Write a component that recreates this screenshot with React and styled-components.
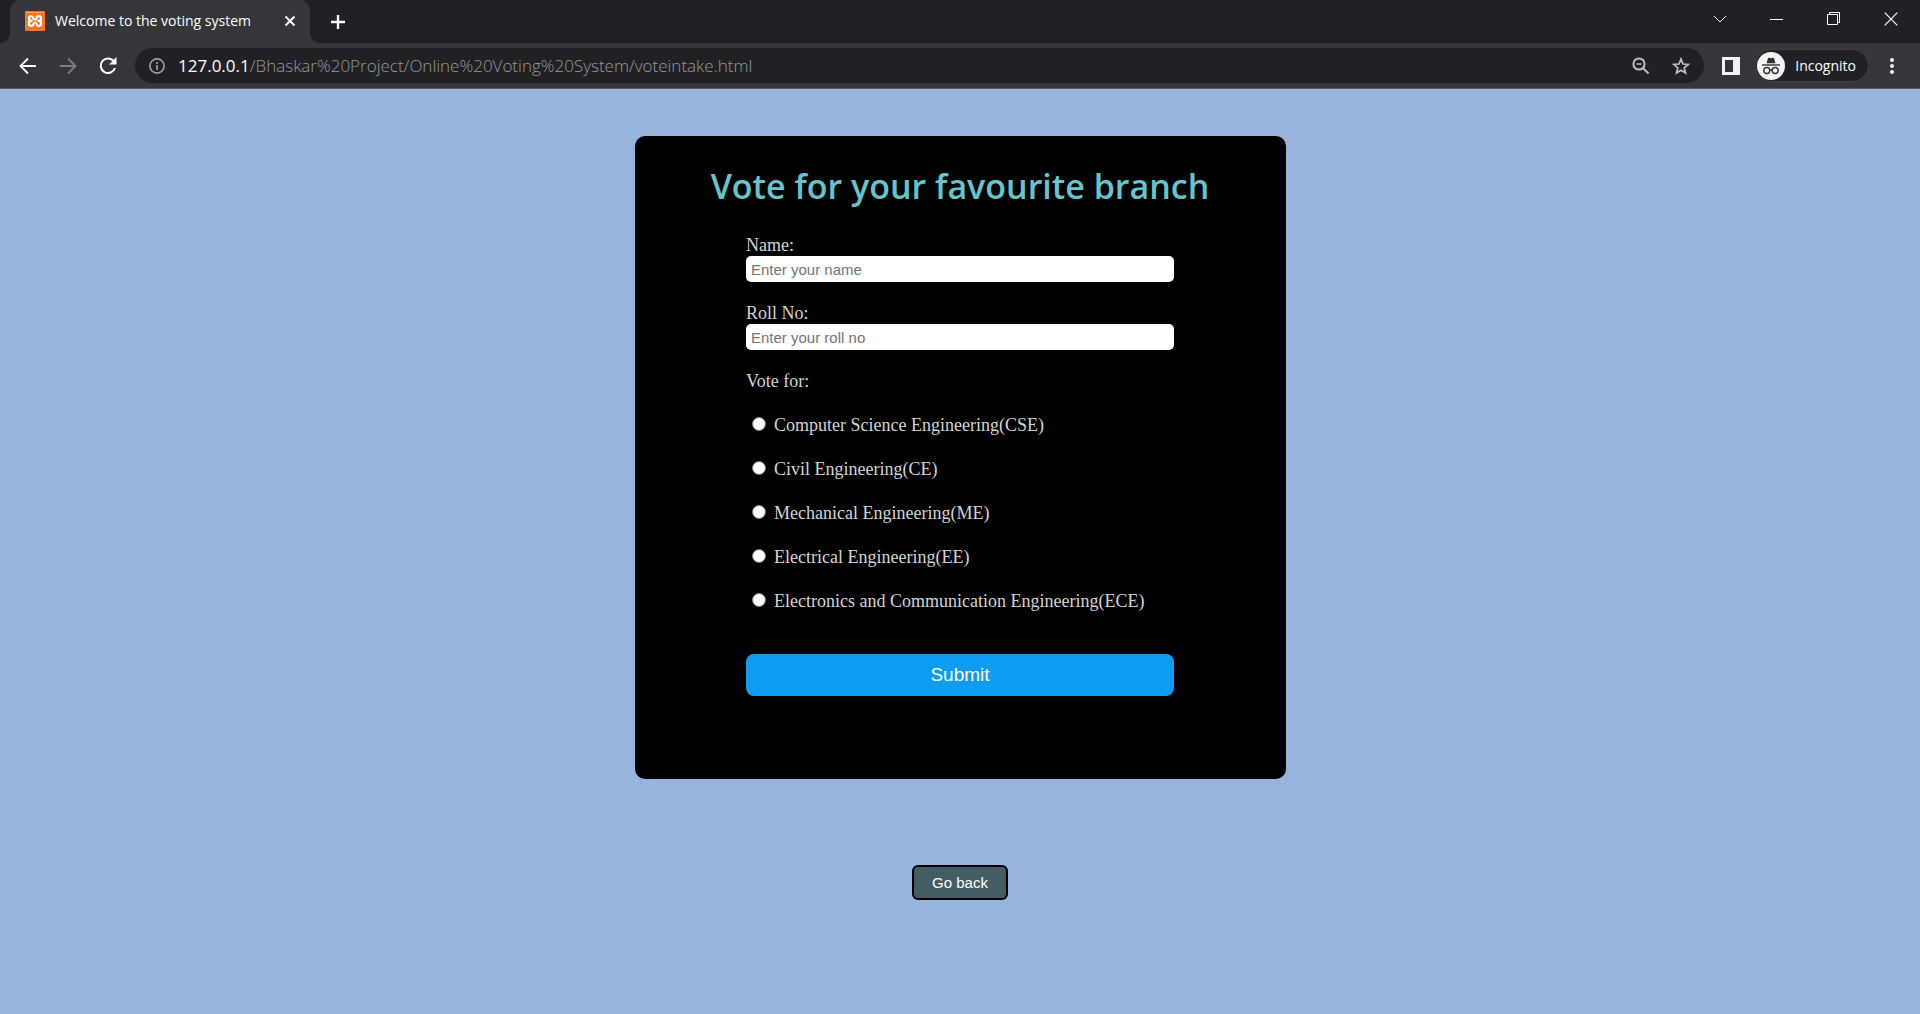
import React from "react";
import styled, { createGlobalStyle } from "styled-components";

const GlobalStyle = createGlobalStyle`
  *, *::before, *::after { box-sizing: border-box; }
  html, body, #root { height: 100%; }
  body { margin: 0; background: #99b4dc; }
  button, input { font-family: "Liberation Sans", Arial, sans-serif; }
`;

const Window = styled.div`
  display: flex;
  flex-direction: column;
  min-height: 100%;
`;

const Chrome = styled.header`
  background: #35363a;
  border-bottom: 1px solid #5b5c60;
  font-family: "Open Sans", "Noto Sans", sans-serif;
  color: #fff;
`;

const TabStrip = styled.div`
  display: flex;
  align-items: stretch;
  height: 43px;
  padding: 0 1px 0 10px;
  background: #202124;
`;

const Tab = styled.div`
  position: relative;
  display: flex;
  align-items: center;
  width: 300px;
  padding: 0 12px 1px 15px;
  gap: 10px;
  background: #35363a;
  border-radius: 10px 10px 0 0;

  &::before,
  &::after {
    content: "";
    position: absolute;
    bottom: 0;
    width: 10px;
    height: 10px;
  }
  &::before {
    right: 100%;
    background: radial-gradient(circle at 0 0, transparent 10px, #35363a 10px);
  }
  &::after {
    left: 100%;
    background: radial-gradient(circle at 100% 0, transparent 10px, #35363a 10px);
  }
`;

const TabTitle = styled.span`
  flex: 1;
  font-size: 14px;
  line-height: 20px;
  white-space: nowrap;
`;

const IconButton = styled.button`
  display: inline-flex;
  align-items: center;
  justify-content: center;
  flex: none;
  width: ${(p) => p.$w || 40}px;
  height: ${(p) => p.$h || 35}px;
  padding: 0;
  border: 0;
  background: none;
  color: ${(p) => p.$color || "#fff"};
`;

const NewTab = styled(IconButton)`
  align-self: center;
  margin-left: 8px;
`;

const WindowControls = styled.div`
  display: flex;
  margin-left: auto;
`;

const Toolbar = styled.div`
  display: flex;
  align-items: center;
  height: 45px;
  padding: 0 5px 0 8px;
`;

const AddressBar = styled.div`
  display: flex;
  flex: 1;
  align-items: center;
  height: 35px;
  margin: 0 7px;
  padding: 0 3px 0 2px;
  border-radius: 18px;
  background: #202124;
`;

const Url = styled.div`
  flex: 1;
  padding-left: 1px;
  color: #96999e;
  font-size: 17px;
  font-weight: 300;
  line-height: 24px;
  white-space: nowrap;
`;

const Host = styled.span`
  color: #fff;
  font-weight: 400;
`;

const Incognito = styled.button`
  display: flex;
  align-items: center;
  gap: 10px;
  height: 33px;
  margin-left: 4px;
  padding: 0 12px 0 1px;
  border: 1px solid #3f4043;
  border-radius: 17px;
  background: #202124;
  color: #fff;
  font-family: "Open Sans", "Noto Sans", sans-serif;
  font-size: 14px;
`;

const Page = styled.main`
  display: flex;
  flex: 1;
  flex-direction: column;
  align-items: center;
  padding: 47px 16px;
  background: #99b4dc;
`;

const Card = styled.section`
  width: 100%;
  max-width: 651px;
  padding: 28px 32px 83px;
  border-radius: 10px;
  background: #000;
  color: #d3d3d3;
  font-family: "Liberation Serif", "Times New Roman", serif;
  font-size: 18px;
  line-height: 18px;
`;

const Heading = styled.h1`
  margin: 0 0 28px;
  color: #66c5cc;
  font-family: "Trebuchet MS", "Open Sans", sans-serif;
  font-size: 34px;
  font-weight: 600;
  line-height: 44px;
  text-align: center;
`;

const Form = styled.form`
  display: flex;
  flex-direction: column;
  max-width: 428px;
  margin: 0 auto;
`;

const Field = styled.div`
  display: flex;
  flex-direction: column;
  gap: 2px;
  margin-bottom: 22px;
`;

const TextInput = styled.input`
  width: 100%;
  height: 26px;
  padding: 0 5px;
  border: 0;
  border-radius: 5px;
  background: #fff;
  font-size: 15px;

  &::placeholder {
    color: #757575;
  }
`;

const Choices = styled.fieldset`
  display: flex;
  flex-direction: column;
  gap: 26px;
  min-width: 0;
  margin: 0 0 44px;
  padding: 0;
  border: 0;
`;

const Legend = styled.legend`
  margin-bottom: 26px;
  padding: 0;
`;

const Choice = styled.label`
  display: flex;
  align-items: center;
  gap: 8px;
  padding-left: 6px;
`;

const Radio = styled.input`
  appearance: none;
  width: 14px;
  height: 14px;
  margin: 0 0 2px;
  border: 1px solid #767676;
  border-radius: 50%;
  background: #fff;

  &:checked {
    border: 4px solid #0075ff;
  }
`;

const Submit = styled.button`
  height: 42px;
  border: 0;
  border-radius: 8px;
  background: #0e9cf2;
  color: #fff;
  font-size: 19px;
`;

const GoBack = styled.button`
  height: 35px;
  margin-top: 86px;
  padding: 0 18px;
  border: 2px solid #000;
  border-radius: 6px;
  background: #435d62;
  color: #fff;
  font-size: 15px;
`;

const branches = [
  ["cse", "Computer Science Engineering(CSE)"],
  ["ce", "Civil Engineering(CE)"],
  ["me", "Mechanical Engineering(ME)"],
  ["ee", "Electrical Engineering(EE)"],
  ["ece", "Electronics and Communication Engineering(ECE)"],
];

function Svg({ size = 20, width = 2, children, ...rest }) {
  return (
    <svg
      width={size}
      height={size}
      viewBox={`0 0 ${size} ${size}`}
      fill="none"
      stroke="currentColor"
      strokeWidth={width}
      aria-hidden="true"
      {...rest}
    >
      {children}
    </svg>
  );
}

function Favicon() {
  return (
    <Svg size={20}>
      <rect width="20" height="20" rx="1" fill="#f37623" stroke="none" />
      <path d="M1 1.500h18" stroke="#f9a368" strokeWidth="1" />
      <path
        d="M8 7.500V6.500C8 5 4 4.500 4 7.200C4 9 5 9.900 6.500 9.900C4.500 9.900 3.800 11 3.800 12.600C3.800 15.800 8.500 15.500 8.500 13C8.500 11.500 11.500 11.500 11.500 13C11.500 15.500 16.200 15.800 16.200 12.600C16.200 11 15.500 9.900 13.500 9.900C15 9.900 16 9 16 7.200C16 4.500 11.500 4.500 11.500 7.500C11.500 8.800 9 9 8 7.500"
        stroke="#fff"
        strokeWidth="2.200"
        strokeLinecap="round"
        strokeLinejoin="round"
      />
    </Svg>
  );
}

function IncognitoBadge() {
  return (
    <Svg size={28} width={1.4}>
      <circle cx="14" cy="14" r="14" fill="#f1f3f4" stroke="none" />
      <path d="M9.500 11.200 11 6.300q.3-.8 1.200-.5l1.800.5 1.800-.5q.9-.3 1.200.5l1.500 4.900z" fill="#303134" stroke="none" />
      <path d="M5 13h18" stroke="#303134" />
      <circle cx="9.800" cy="18.500" r="3" stroke="#303134" />
      <circle cx="18.200" cy="18.500" r="3" stroke="#303134" />
      <path d="M12.800 18.200q1.200-.8 2.400 0" stroke="#303134" />
    </Svg>
  );
}

export default function App() {
  return (
    <Window>
      <GlobalStyle />
      <Chrome>
        <TabStrip>
          <Tab>
            <Favicon />
            <TabTitle>Welcome to the voting system</TabTitle>
            <IconButton $w={16} $h={20} aria-label="Close tab">
              <Svg size={12}><path d="M1.500 1.500l9 9M10.500 1.500l-9 9" /></Svg>
            </IconButton>
          </Tab>
          <NewTab aria-label="New tab">
            <Svg size={16}><path d="M8 1v14M1 8h14" strokeWidth="2.400" /></Svg>
          </NewTab>
          <WindowControls>
            <IconButton $w={57} $h={37} aria-label="Search tabs">
              <Svg size={14} width={1}><path d="M1 4l6 6 6-6" /></Svg>
            </IconButton>
            <IconButton $w={57} $h={37} aria-label="Minimize">
              <Svg size={14} width={1}><path d="M0 7.500h13" /></Svg>
            </IconButton>
            <IconButton $w={57} $h={37} aria-label="Restore">
              <Svg size={14} width={1}><path d="M.5 2.500h10v10H.5zM2.500 2.500v-2h10v10h-2" /></Svg>
            </IconButton>
            <IconButton $w={57} $h={37} aria-label="Close">
              <Svg size={14} width={1.2}><path d="M.7.7l12.600 12.600M13.300.7L.7 13.300" /></Svg>
            </IconButton>
          </WindowControls>
        </TabStrip>
        <Toolbar>
          <IconButton aria-label="Back">
            <Svg size={18} width={1.8}><path d="M17 9H2M9 1.500L1.500 9 9 16.500" /></Svg>
          </IconButton>
          <IconButton $color="#7c7d80" aria-label="Forward">
            <Svg size={18} width={1.8}><path d="M1 9h15M9 1.500L16.500 9 9 16.500" /></Svg>
          </IconButton>
          <IconButton aria-label="Reload">
            <Svg size={18}>
              <path d="M14.800 4.200A7.300 7.300 0 1 0 16 11" />
              <path d="M17.500 0v7.500H10z" fill="currentColor" stroke="none" />
            </Svg>
          </IconButton>
          <AddressBar>
            <IconButton $color="#9aa0a6" aria-label="View site information">
              <Svg size={16} width={1.700}>
                <circle cx="8" cy="8" r="7.100" />
                <path d="M8 7v5M8 4v2" />
              </Svg>
            </IconButton>
            <Url role="textbox" aria-label="Address" aria-readonly="true">
              <Host>127.0.0.1</Host>/Bhaskar%20Project/Online%20Voting%20System/voteintake.html
            </Url>
            <IconButton $color="#bdc1c6" aria-label="Zoom">
              <Svg size={18}>
                <circle cx="7" cy="7" r="5.600" />
                <path d="M11 11l5.500 5.500" />
                <path d="M4.500 7h5" strokeWidth="1.500" />
              </Svg>
            </IconButton>
            <IconButton $color="#bdc1c6" aria-label="Bookmark this tab">
              <Svg size={18} width={1.700}>
                <path d="M9 2l2 5 5.200.4-4 3.400 1.300 5.200L9 13.200 4.500 16l1.300-5.200-4-3.400L7 7z" />
              </Svg>
            </IconButton>
          </AddressBar>
          <IconButton $color="#f1f3f4" aria-label="Side panel">
            <Svg size={18}>
              <path d="M0 0h18v18H0zM3 3v12h8V3z" fill="currentColor" fillRule="evenodd" stroke="none" />
            </Svg>
          </IconButton>
          <Incognito>
            <IncognitoBadge />
            Incognito
          </Incognito>
          <IconButton $w={46} $color="#f1f3f4" aria-label="Menu">
            <Svg size={18}>
              <g fill="currentColor" stroke="none">
                <circle cx="9" cy="3" r="2" />
                <circle cx="9" cy="9" r="2" />
                <circle cx="9" cy="15" r="2" />
              </g>
            </Svg>
          </IconButton>
        </Toolbar>
      </Chrome>

      <Page>
        <Card>
          <Heading>Vote for your favourite branch</Heading>
          <Form onSubmit={(e) => e.preventDefault()}>
            <Field>
              <label htmlFor="name">Name:</label>
              <TextInput id="name" type="text" placeholder="Enter your name" />
            </Field>
            <Field>
              <label htmlFor="roll">Roll No:</label>
              <TextInput id="roll" type="text" placeholder="Enter your roll no" />
            </Field>
            <Choices>
              <Legend>Vote for:</Legend>
              {branches.map(([id, text]) => (
                <Choice key={id} htmlFor={id}>
                  <Radio type="radio" id={id} name="branch" value={id} />
                  {text}
                </Choice>
              ))}
            </Choices>
            <Submit type="submit">Submit</Submit>
          </Form>
        </Card>
        <GoBack type="button">Go back</GoBack>
      </Page>
    </Window>
  );
}
